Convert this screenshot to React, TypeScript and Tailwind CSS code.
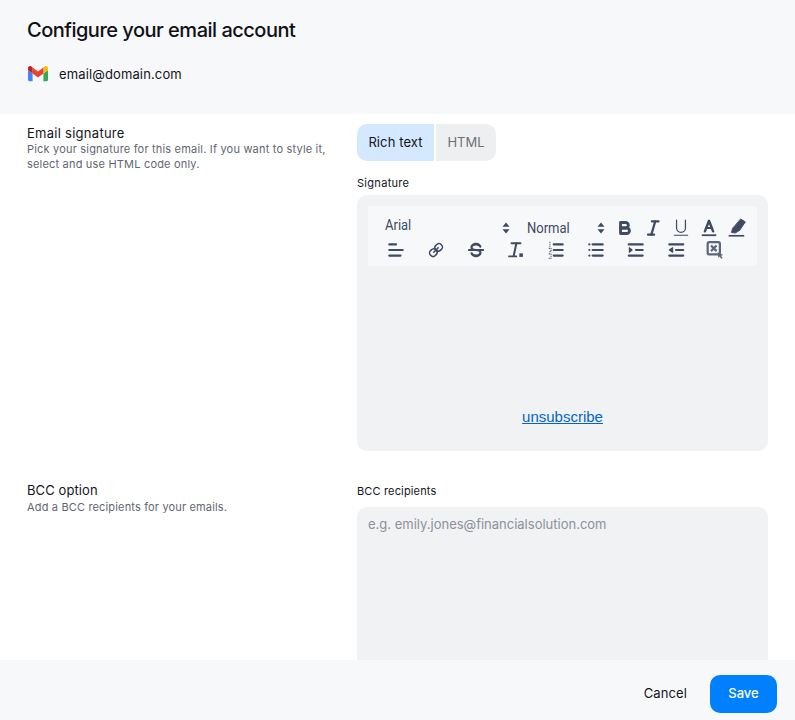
const ICON = "#3f4a63";

function Q({ children, w = 20 }: { children: React.ReactNode; w?: number }) {
  return (
    <svg viewBox="0 0 18 18" width={w} height={w} fill="none" stroke={ICON} strokeWidth={2} strokeLinecap="round" strokeLinejoin="round" className="block shrink-0">
      {children}
    </svg>
  );
}

const Updown = () => (
  <svg width="8" height="12" viewBox="0 0 8 12" className="block shrink-0">
    <path d="M4 0.5 7.5 4.8H0.5Z M4 11.5 0.5 7.2H7.5Z" fill={ICON} />
  </svg>
);

const icons = {
  bold: (<Q><path strokeWidth={2.6} d="M5,4H9.5A2.5,2.5,0,0,1,12,6.5v0A2.5,2.5,0,0,1,9.5,9H5V4Z" /><path strokeWidth={2.6} d="M5,9h5.5A2.5,2.5,0,0,1,13,11.5v0A2.5,2.5,0,0,1,10.5,14H5V9Z" /></Q>),
  italic: (<Q><line x1="8" x2="14" y1="3" y2="3" /><line x1="4.5" x2="10" y1="15" y2="15" /><line x1="7.5" x2="11" y1="15" y2="3" /></Q>),
  underline: (<Q><path strokeWidth={1.1} d="M5,2V9a4,4,0,0,0,4,4H9a4,4,0,0,0,4-4V2" /><rect x="2.5" y="15" width="13" height="1" rx=".5" fill={ICON} stroke="none" /></Q>),
  color: (<Q><line x1="2.5" x2="15.5" y1="15.5" y2="15.5" strokeWidth={1.6} strokeLinecap="butt" /><polyline points="5.3 12 9 2.5 12.7 12" strokeWidth={2.2} /><line x1="11.63" x2="6.38" y1="9" y2="9" /></Q>),
  bg: (<Q><line x1="1.5" x2="15.5" y1="16" y2="16" strokeWidth={1.5} strokeLinecap="butt" /><path d="M12.5 1 16.5 3.5 11.5 11 7.5 13.5 4 13 5 9.5Z" fill={ICON} strokeWidth={.8} /></Q>),
  align: (<Q><line x1="3" x2="15" y1="9" y2="9" /><line x1="3" x2="13" y1="14" y2="14" /><line x1="3" x2="9" y1="4" y2="4" /></Q>),
  link: (<Q><g strokeWidth={1.4}><line x1="7" x2="11" y1="11" y2="7" /><path d="M9.1,4.577a3.476,3.476,0,0,0-.36,4.679A3.476,3.476,0,0,0,13.423,8.9C14.815,7.5,15.965,6.4,13.783,4.217S10.5,3.185,9.1,4.577Z" /><path d="M4.577,9.1a3.476,3.476,0,0,1,4.679-.36,3.476,3.476,0,0,1-.36,4.679c-1.392,1.392-2.5,2.542-4.679.36S3.185,10.5,4.577,9.1Z" /></g></Q>),
  strike: (<Q><line x1="15.5" x2="2.5" y1="9" y2="9" strokeWidth={1.6} /><path stroke="none" fill={ICON} d="M9.007,8C6.542,7.791,6,7.519,6,6.5,6,5.792,7.283,5,9,5c1.571,0,2.765.679,2.969,1.309a1,1,0,0,0,1.9-.617C13.356,4.106,11.354,2.5,9,2.5,6.2,2.5,4,4.538,4,6.5a3.2,3.2,0,0,0,.5,1.843Z" /><path stroke="none" fill={ICON} d="M8.984,10C11.457,10.208,12,10.479,12,11.5c0,.708-1.283,1.5-3,1.5-1.571,0-2.765-.679-2.969-1.309a1,1,0,1,0-1.9.617C4.644,13.894,6.646,15.5,9,15.5c2.8,0,5-2.038,5-4a3.2,3.2,0,0,0-.5-1.843Z" /></Q>),
  clean: (<Q><line x1="5" x2="13" y1="3" y2="3" strokeWidth={1.8} /><line x1="7" x2="9.35" y1="14" y2="3" strokeWidth={1.8} /><rect x="2" y="14" width="8" height="1.6" rx=".5" fill={ICON} stroke="none" /><rect x="12" y="12" width="3.2" height="3.2" fill={ICON} stroke="none" /></Q>),
  ol: (<Q><line x1="7" x2="15" y1="4" y2="4" /><line x1="7" x2="15" y1="9" y2="9" /><line x1="7" x2="15" y1="14" y2="14" /><path strokeWidth={1} strokeDasharray="1 0.8" strokeLinecap="butt" d="M3.5 1.5V6 M2.5 7.5H4.5V10.5H2.5 M2.5 12.5H4.5V16.5H2.5" /></Q>),
  ul: (<Q><line x1="6" x2="15" y1="4" y2="4" /><line x1="6" x2="15" y1="9" y2="9" /><line x1="6" x2="15" y1="14" y2="14" /><line x1="3" x2="3" y1="4" y2="4" /><line x1="3" x2="3" y1="9" y2="9" /><line x1="3" x2="3" y1="14" y2="14" /></Q>),
  indent: (<Q><line x1="2.5" x2="15" y1="14" y2="14" /><line x1="2.5" x2="15" y1="4" y2="4" /><line x1="9" x2="15" y1="9" y2="9" /><polyline points="3 7 3 11 5.5 9 3 7" fill={ICON} strokeWidth={1} /></Q>),
  outdent: (<Q><line x1="3" x2="15.5" y1="14" y2="14" /><line x1="3" x2="15.5" y1="4" y2="4" /><line x1="9" x2="15.5" y1="9" y2="9" /><polyline points="6 7 6 11 3 9 6 7" fill={ICON} strokeWidth={1} /></Q>),
  table: (<svg viewBox="0 0 18 18" width="20" height="20" fill="none" className="block shrink-0"><rect x="1.5" y="2" width="11" height="11" rx="1.5" stroke="#5d6679" strokeWidth={2} /><path d="M4.5 5 9.5 10 M9.5 5 4.5 10" stroke="#5d6679" strokeWidth={2} /><path d="M10.5 11 15.5 13.5 13.5 14.2 15 16.3 13.5 16.8 12.5 14.8 11 16Z" fill="#5d6679" /></svg>),
};

function Gmail() {
  return (
    <svg width="20" height="16" viewBox="0 0 20 16" className="block shrink-0">
      <path d="M1.4 15.2H4.6V7.4L0 4V13.8C0 14.6.6 15.2 1.4 15.2Z" fill="#4285F4" />
      <path d="M15.4 15.2H18.6C19.4 15.2 20 14.6 20 13.8V4L15.4 7.4Z" fill="#34A853" />
      <path d="M15.4 1.4V7.4L20 4V2.2C20 .4 18 -.6 16.6 .5Z" fill="#FBBC04" />
      <path d="M4.6 7.4V1.4L10 5.5 15.4 1.4V7.4L10 11.4Z" fill="#EA4335" />
      <path d="M0 2.2V4L4.6 7.4V1.4L3.4 .5C2 -.6 0 .4 0 2.2Z" fill="#C5221F" />
    </svg>
  );
}

export default function App() {
  const sans = "font-['Inter','Liberation_Sans',sans-serif]";
  return (
    <div className={`h-[720px] w-[795px] flex flex-col overflow-hidden bg-white ${sans}`}>
      <header className="h-[114px] shrink-0 bg-[#f7f8fa] pl-[27px] pt-[18px]">
        <h1 className="text-[20px] leading-[24px] font-medium text-[#0f1115] tracking-[-0.5px]">Configure your email account</h1>
        <div className="mt-[20px] flex items-center gap-[11px] h-[24px] ml-px">
          <Gmail />
          <span className="text-[13px] leading-[20px] text-[#12151c] tracking-[0.13px]">email@domain.com</span>
        </div>
      </header>

      <main className="flex-1 min-h-0 overflow-hidden grid grid-cols-[330px_411px] content-start pl-[27px]">
        <section className="pt-[10px]">
          <h2 className="text-[13px] leading-[18px] text-[#12151c] tracking-[0.27px]">Email signature</h2>
          <p className="text-[11px] leading-[15px] text-[#5f6673] w-[310px] tracking-[0.19px]">Pick your signature for this email. If you want to style it, select and use HTML code only.</p>
        </section>
        <section className="pt-[10px]">
          <div className="flex h-[37px]">
            <button className="w-[77px] rounded-l-[10px] bg-[#d4e8ff] text-[13px] text-[#12151c] tracking-[0.1px]">Rich text</button>
            <button className="ml-[2px] w-[60px] rounded-r-[10px] bg-[#eeeff1] text-[13px] text-[#6c6f75]">HTML</button>
          </div>
          <label className="block mt-[14px] text-[11px] leading-[16px] text-[#12151c] tracking-[0.3px]">Signature</label>
          <div className="mt-[4px] h-[256px] rounded-[10px] bg-[#f1f2f4] p-[11px] flex flex-col">
            <div className="h-[60px] w-[389px] bg-[#f7f8fa] pt-[10px] text-[#3f4a63]">
              <div className="flex items-center h-[24px]">
                <span className="ml-[17px] w-[117px] text-[13px] leading-[20px] font-['Roboto',sans-serif] -mt-[4px] scale-y-110 origin-left">Arial</span>
                <Updown />
                <span className="ml-[17px] w-[70px] text-[13px] leading-[20px] font-['Roboto',sans-serif] mt-[2px] scale-y-110 origin-left">Normal</span>
                <Updown />
                <span className="ml-[10px] flex gap-[8px]">
                  {icons.bold}{icons.italic}{icons.underline}{icons.color}{icons.bg}
                </span>
              </div>
              <div className="flex pl-[18px] gap-[20px]">
                {icons.align}{icons.link}{icons.strike}{icons.clean}{icons.ol}{icons.ul}{icons.indent}{icons.outdent}{icons.table}
              </div>
            </div>
            <div className="mt-[142px] text-center text-[15px] leading-[18px] font-['Liberation_Sans',sans-serif]">
              <a className="text-[#0066cc] underline">unsubscribe</a>
            </div>
          </div>
        </section>

        <section className="pt-[30px]">
          <h2 className="text-[13px] leading-[18px] text-[#12151c] tracking-[0.1px]">BCC option</h2>
          <p className="mt-px text-[11px] leading-[15px] text-[#5f6673] tracking-[0.16px]">Add a BCC recipients for your emails.</p>
        </section>
        <section className="pt-[32px]">
          <label className="block text-[11px] leading-[16px] text-[#12151c] tracking-[0.15px]">BCC recipients</label>
          <div className="mt-[8px] h-[200px] rounded-[10px] bg-[#f1f2f4] px-[11px] pt-[7px] text-[13px] leading-[20px] text-[#8b919b]">e.g. emily.jones@financialsolution.com</div>
        </section>
      </main>

      <footer className="h-[60px] shrink-0 bg-[#f7f8fa] flex items-start justify-end pr-[18px] pt-[15px]">
        <button className="h-[38px] text-[13px] text-[#12151c] mr-[23px] tracking-[0.1px]">Cancel</button>
        <button className="w-[67px] h-[38px] rounded-[10px] bg-[#0080ff] text-white text-[13px] font-medium">Save</button>
      </footer>
    </div>
  );
}
